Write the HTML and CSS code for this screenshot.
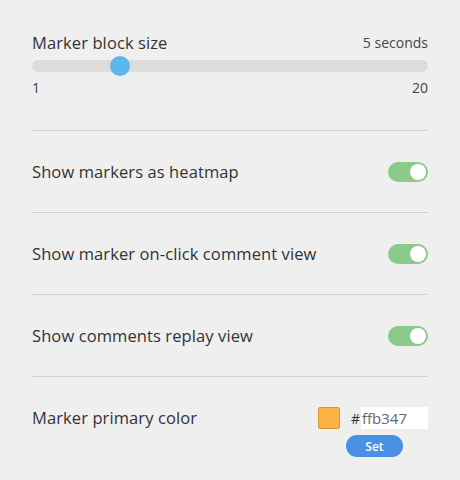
FILE: index.html
```html
<!DOCTYPE html>
<html lang="en">
<head>
  <meta charset="UTF-8" />
  <title>Marker settings</title>
  <link rel="stylesheet" href="styles.css">
</head>
<body>
  <div class="settings">
    <div class="section slider-section">
      <div class="slider-head">
        <span class="label">Marker block size</span>
        <span class="value">5 seconds</span>
      </div>
      <div class="track">
        <div class="thumb" style="left: 22.3%;"></div>
      </div>
      <div class="range-labels">
        <span>1</span>
        <span>20</span>
      </div>
    </div>

    <div class="section row">
      <span class="label">Show markers as heatmap</span>
      <span class="toggle on"><span class="knob"></span></span>
    </div>

    <div class="section row">
      <span class="label">Show marker on-click comment view</span>
      <span class="toggle on"><span class="knob"></span></span>
    </div>

    <div class="section row">
      <span class="label">Show comments replay view</span>
      <span class="toggle on"><span class="knob"></span></span>
    </div>

    <div class="color-row">
      <span class="label">Marker primary color</span>
      <div class="color-picker">
        <div class="color-line">
          <span class="swatch"></span>
          <span class="hash">#</span>
          <input class="hex" type="text" value="ffb347">
        </div>
        <button class="set-btn">Set</button>
      </div>
    </div>
  </div>
</body>
</html>
```

FILE: styles.css
```css
body {
  margin: 0;
  background-color: #efefef;
  font-family: 'Open Sans', sans-serif;
  color: #333;
}

.settings {
  padding: 0 32px;
}

.section {
  border-bottom: 1px solid #cfcfcf;
}

.label {
  font-size: 16.5px;
  letter-spacing: 0.1px;
}

.slider-section {
  height: 131px;
  box-sizing: border-box;
  padding-top: 31px;
}

.slider-head {
  display: flex;
  justify-content: space-between;
  align-items: center;
  height: 22px;
}

.slider-head .value {
  font-size: 14px;
  color: #444;
}

.track {
  position: relative;
  height: 12px;
  margin-top: 7px;
  background: #dcdcdc;
  border-radius: 6px;
}

.thumb {
  position: absolute;
  top: -4px;
  width: 20px;
  height: 20px;
  margin-left: -10px;
  border-radius: 50%;
  background: #5cb6ee;
}

.range-labels {
  display: flex;
  justify-content: space-between;
  margin-top: 6px;
  font-size: 14px;
  color: #444;
}

.row {
  height: 82px;
  box-sizing: border-box;
  display: flex;
  justify-content: space-between;
  align-items: center;
}

.toggle {
  width: 40px;
  height: 20px;
  border-radius: 10px;
  background: #8acb8c;
  display: flex;
  align-items: center;
  justify-content: flex-end;
  padding: 0 2px;
  box-sizing: border-box;
}

.knob {
  width: 16px;
  height: 16px;
  border-radius: 50%;
  background: #fff;
}

.color-row {
  display: flex;
  justify-content: space-between;
  align-items: flex-start;
  padding-top: 30px;
}

.color-row .label {
  line-height: 22px;
}

.color-picker {
  display: flex;
  flex-direction: column;
  align-items: center;
  gap: 6px;
}

.color-line {
  display: flex;
  align-items: center;
  height: 22px;
}

.swatch {
  width: 20px;
  height: 20px;
  border: 1px solid #d9952e;
  border-radius: 2px;
  background: #ffb347;
  margin-right: 11px;
}

.hash {
  font-size: 14px;
  color: #333;
  margin-right: 1px;
}

.hex {
  width: 67px;
  height: 22px;
  box-sizing: border-box;
  border: none;
  background: #fff;
  padding: 0 1px;
  font-family: 'Open Sans', sans-serif;
  font-size: 15px;
  color: #666;
}

.set-btn {
  width: 57px;
  height: 22px;
  border: none;
  border-radius: 11px;
  background: #4a8fe6;
  color: #fff;
  font-family: 'Open Sans', sans-serif;
  font-size: 12px;
  font-weight: 600;
  margin-left: 3px;
  cursor: pointer;
}
```
